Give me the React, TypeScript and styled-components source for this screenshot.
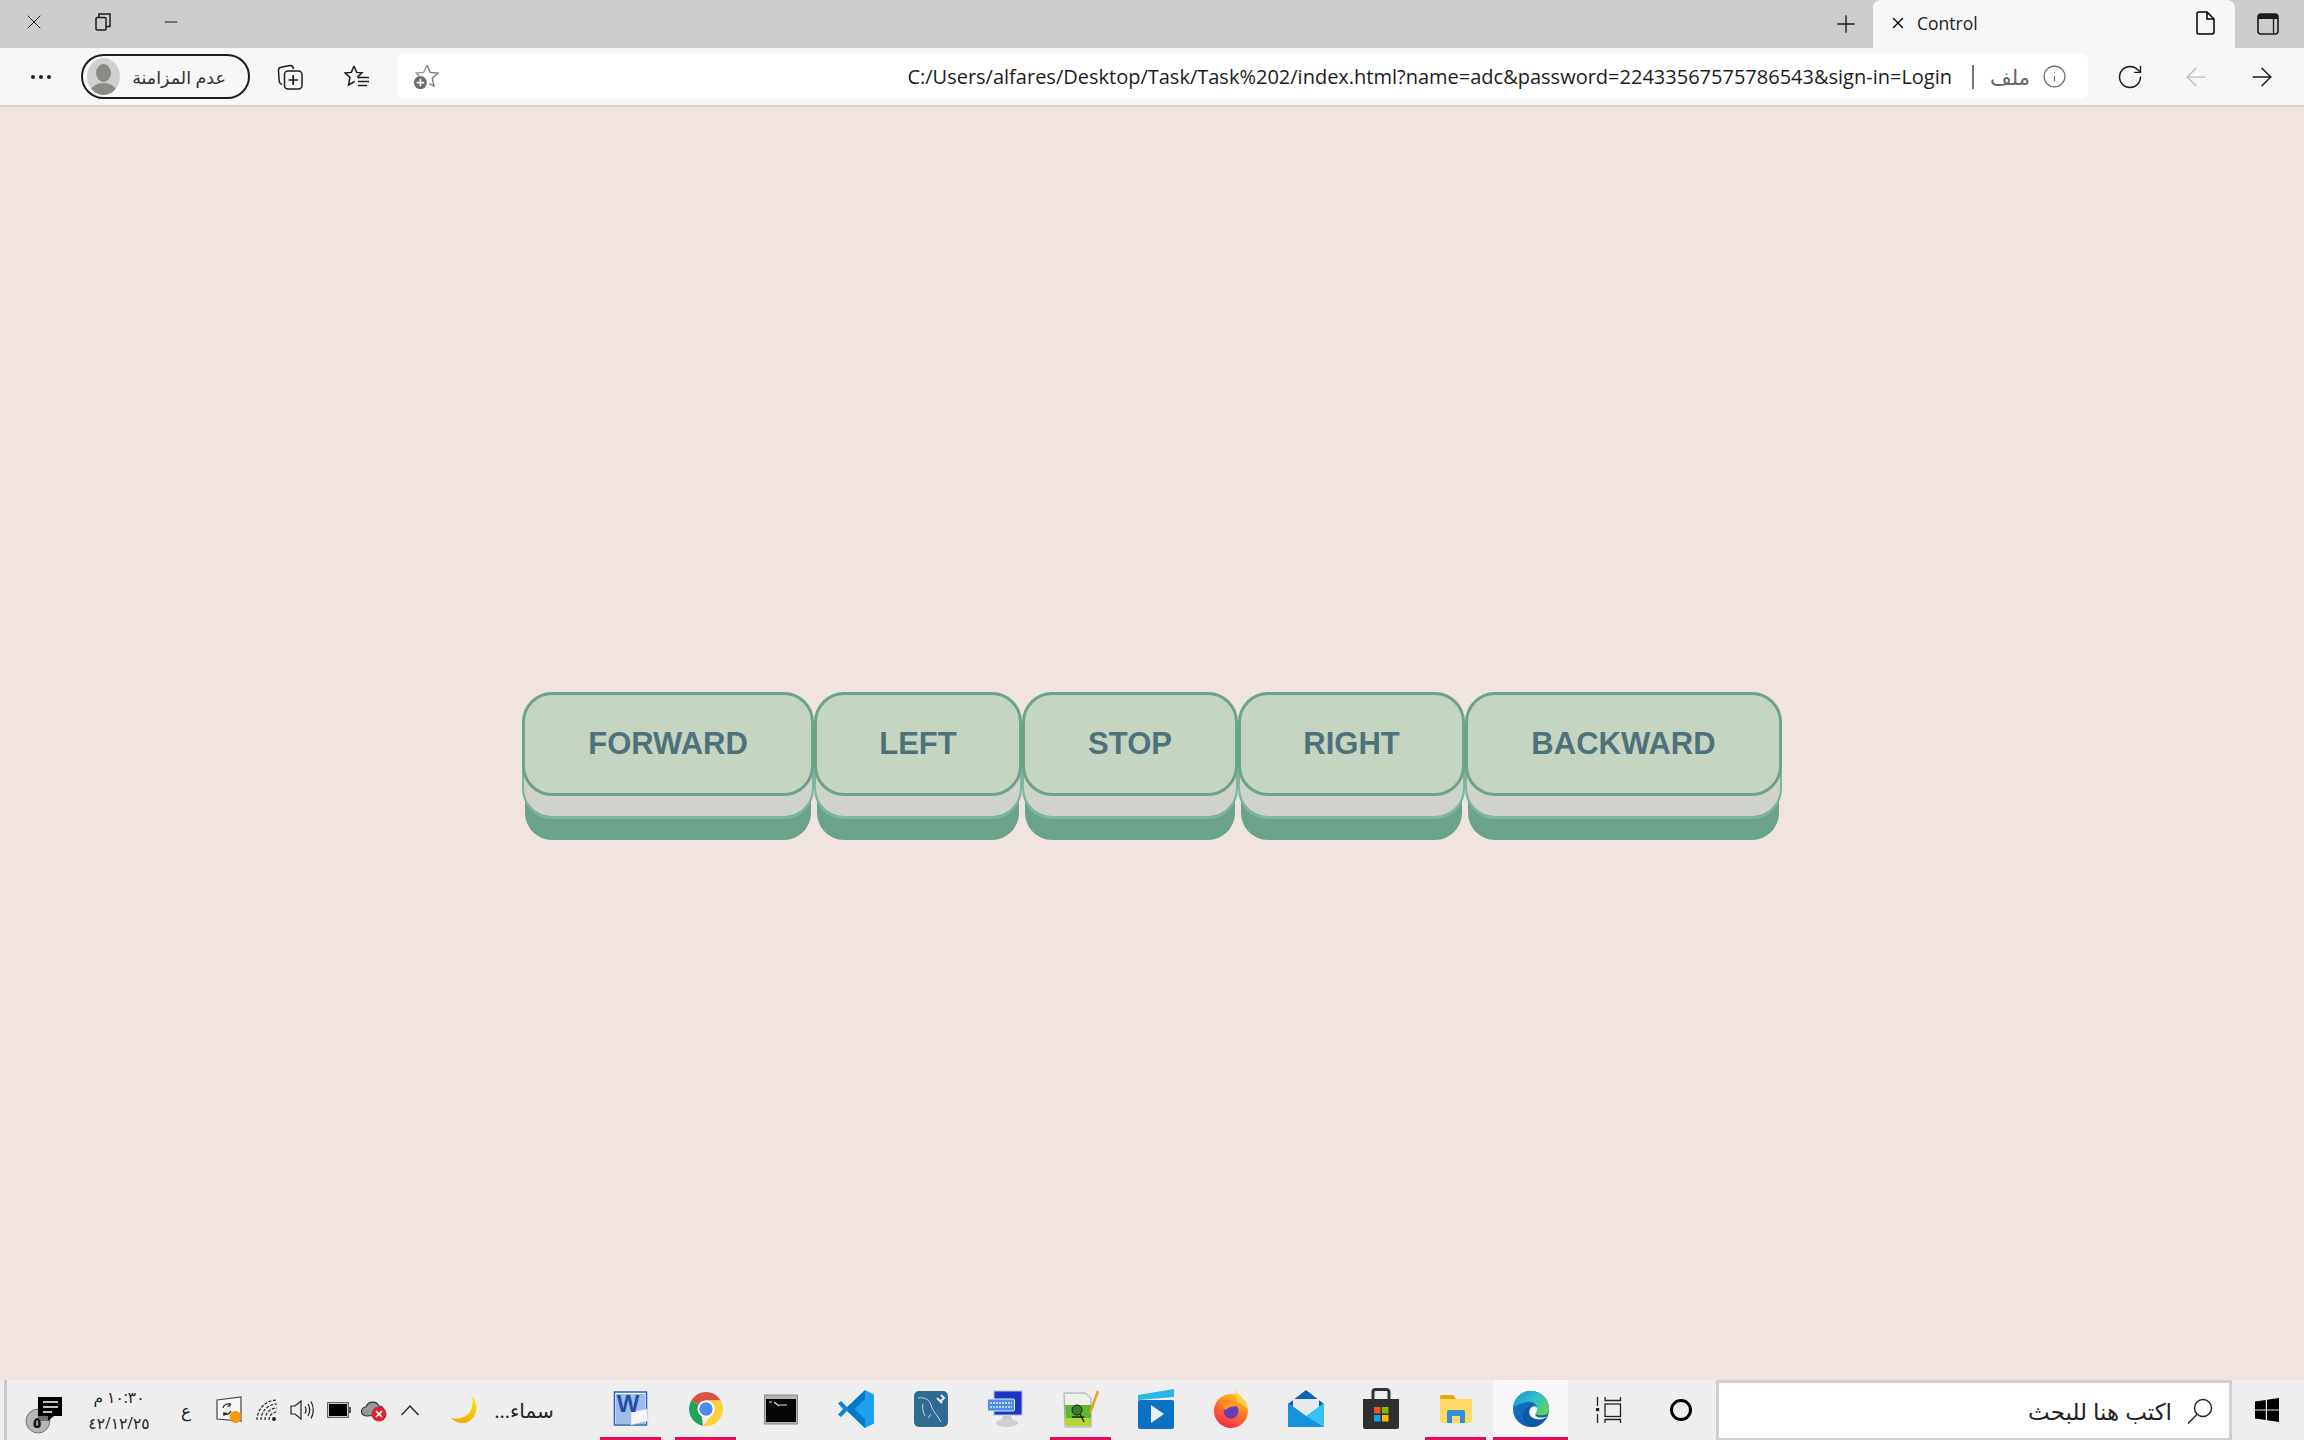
import React from "react";
import styled, { createGlobalStyle } from "styled-components";
import { ArrowLeft, ArrowRight, Info, Minus, Plus, RotateCw, X } from "lucide-react";

const UI_FONT = `"Open Sans", "DejaVu Sans", sans-serif`;

const COMMANDS: Array<{ label: string; width: number }> = [
  { label: "FORWARD", width: 292 },
  { label: "LEFT", width: 208 },
  { label: "STOP", width: 216 },
  { label: "RIGHT", width: 227 },
  { label: "BACKWARD", width: 317 },
];

const GlobalStyle = createGlobalStyle`
  html, body, #root {
    margin: 0;
    height: 100%;
  }
  body {
    background: #efe4df;
    font-family: ${UI_FONT};
    overflow: hidden;
  }
`;

const Screen = styled.div`
  display: flex;
  flex-direction: column;
  height: 1440px;
`;

// Browser chrome
const TabStrip = styled.div`
  display: flex;
  align-items: stretch;
  height: 48px;
  background: #cdcdcd;
`;

const Slot = styled.div<{ $w: number; $ml?: number }>`
  display: flex;
  align-items: center;
  justify-content: center;
  flex: none;
  width: ${(p) => p.$w}px;
  margin-left: ${(p) => p.$ml ?? 0}px;
  color: #1c1c1c;
`;

const WindowButton = styled(Slot)`
  padding-bottom: 4px;
`;

const NotificationSlot = styled(Slot)`
  padding-top: 12px;
`;

const Spacer = styled.div`
  flex: 1;
`;

const Tab = styled.div`
  display: flex;
  align-items: center;
  width: 362px;
  box-sizing: border-box;
  padding: 0 20px 2px 16px;
  background: #f7f7f7;
  border-radius: 8px 8px 0 0;
`;

const TabTitle = styled.span`
  margin-left: 10px;
  font-size: 17.5px;
  color: #222;
  flex: 1;
`;

const Toolbar = styled.div`
  display: flex;
  align-items: center;
  height: 59px;
  box-sizing: border-box;
  background: #f7f7f7;
  border-bottom: 2px solid #d4d2d0;
`;

const Dots = styled.span`
  display: block;
  width: 4px;
  height: 4px;
  border-radius: 50%;
  background: #222;
  box-shadow: -8px 0 0 #222, 8px 0 0 #222;
`;

const ProfilePill = styled.div`
  display: flex;
  align-items: center;
  flex: none;
  width: 169px;
  height: 45px;
  box-sizing: border-box;
  padding: 0 22px 0 4px;
  border: 2px solid #1d1d1d;
  border-radius: 23px;
  justify-content: space-between;
`;

const Avatar = styled.div`
  position: relative;
  flex: none;
  width: 33px;
  height: 37px;
  overflow: hidden;
  border-radius: 50%;
  background: #d2d0cc;
`;

const AvatarHead = styled.span`
  position: absolute;
  left: 9px;
  top: 6px;
  width: 15px;
  height: 18px;
  border-radius: 50%;
  background: #8c8a87;
`;

const AvatarBody = styled.span`
  position: absolute;
  left: 3px;
  top: 25px;
  width: 27px;
  height: 20px;
  border-radius: 50%;
  background: #8c8a87;
`;

const ProfileLabel = styled.span`
  font-size: 17.5px;
  color: #333;
  white-space: nowrap;
`;

const AddressBar = styled.div`
  display: flex;
  align-items: center;
  flex: 1;
  height: 45px;
  margin-left: 27px;
  box-sizing: border-box;
  padding: 0 21px 0 16px;
  background: #fff;
  border-radius: 6px;
`;

const Url = styled.span`
  font-size: 20px;
  color: #1c1c1c;
  white-space: nowrap;
`;

const Divider = styled.span`
  flex: none;
  width: 2px;
  height: 24px;
  margin: 0 16px 0 20px;
  background: #777;
`;

const FileLabel = styled.span`
  margin-right: 12px;
  font-size: 21px;
  color: #666;
`;

// Page
const Page = styled.main`
  display: flex;
  flex: 1;
  align-items: center;
  justify-content: center;
  background: #efe4df;
`;

const CommandButton = styled.button<{ $w: number }>`
  flex: none;
  width: ${(p) => p.$w}px;
  height: 104px;
  padding: 0;
  background: #c6d5c2;
  border: 3px solid #6ca48a;
  border-radius: 30px;
  color: #4f727a;
  font-family: "Liberation Sans", Arial, sans-serif;
  font-size: 31px;
  font-weight: 700;
  box-shadow:
    0 22px 0 -2px #cfd3cc,
    0 23px 0 0 #7cb79c,
    0 47px 0 -3px #6ba38a;
`;

const CommandRow = styled.div`
  display: flex;
`;

// Taskbar
const Taskbar = styled.footer`
  display: flex;
  align-items: stretch;
  height: 60px;
  background: #eeeeee;
`;

const TaskbarEdge = styled.span`
  flex: none;
  width: 3px;
  margin-left: 4px;
  background: #c9c9c9;
`;

const Clock = styled.div`
  display: flex;
  flex-direction: column;
  align-items: center;
  gap: 5px;
  font-size: 15.5px;
  line-height: 21px;
  color: #222;
`;

const TrayText = styled.span<{ $size: number }>`
  font-size: ${(p) => p.$size}px;
  color: #222;
  white-space: nowrap;
`;

const AppSlot = styled.div<{ $active?: boolean; $running?: boolean }>`
  position: relative;
  display: flex;
  align-items: center;
  justify-content: center;
  flex: none;
  width: 75px;
  box-sizing: border-box;
  padding-bottom: 2px;
  background: ${(p) => (p.$active ? "#f8f8f8" : "transparent")};

  &::after {
    content: "";
    display: ${(p) => (p.$running ? "block" : "none")};
    position: absolute;
    left: ${(p) => (p.$active ? 0 : 7)}px;
    right: ${(p) => (p.$active ? 0 : 7)}px;
    bottom: 0;
    height: 3px;
    background: #e60a5c;
  }
`;

const AppStrip = styled.div`
  display: flex;
  margin-left: 39px;
`;

const SearchBox = styled.div`
  display: flex;
  align-items: center;
  justify-content: flex-end;
  flex: none;
  width: 516px;
  margin-left: 20px;
  box-sizing: border-box;
  padding-right: 16px;
  background: #fff;
  border: 3px solid #cfcfcf;
  border-bottom-width: 2px;
`;

const SearchText = styled.span`
  margin-right: 15px;
  font-size: 23px;
  color: #222;
`;

// Drawings
const Line = { fill: "none", stroke: "currentColor", strokeWidth: 1.5 } as const;

const RestoreIcon = () => (
  <svg width="16" height="18" viewBox="0 0 16 18" {...Line}>
    <rect x="1" y="4.500" width="10" height="12.500" rx="1" />
    <path d="M4 4V1h11v12.500h-4" />
  </svg>
);

const PageIcon = () => (
  <svg width="19" height="24" viewBox="0 0 19 24" {...Line}>
    <path d="M3 1h8l7 7v13a2 2 0 0 1-2 2H3a2 2 0 0 1-2-2V3a2 2 0 0 1 2-2z" />
    <path d="M11 1v7h7" />
  </svg>
);

const SidebarIcon = () => (
  <svg width="22" height="22" viewBox="0 0 22 22">
    <rect x="1" y="1" width="20" height="20" rx="3" fill="none" stroke="#1c1c1c" strokeWidth="1.600" />
    <path d="M1 3a2 2 0 0 1 2-2h16a2 2 0 0 1 2 2v3H1z" fill="#1c1c1c" />
    <path d="M16.500 6v15" stroke="#1c1c1c" strokeWidth="1.300" />
  </svg>
);

const CollectionsIcon = () => (
  <svg width="26" height="26" viewBox="0 0 26 26" fill="none" stroke="#1c1c1c" strokeWidth="1.500">
    <path d="M5 20.500C3 20 2.500 19 2.200 17L1.500 7C1.400 5 2.300 3.500 4 3.300L13 1.600C15 1.300 16 2.500 16.500 5" />
    <rect x="7.500" y="7" width="17.500" height="18" rx="3.500" />
    <path d="M16.200 11v10M11.500 16h9.500" strokeWidth="1.700" />
  </svg>
);

const FavoritesIcon = () => (
  <svg width="26" height="26" viewBox="0 0 26 26" fill="none" stroke="#1c1c1c" strokeWidth="1.500">
    <path d="M10 2l2.700 6.400 5.300.5-4.200 3.800 1.300 1.500M10 2L7.300 8.400 1 9l5 4.400L4.500 21l6.200-3.500" />
    <path d="M14 13.500h11M14 17.500h11M14 21.500h9" strokeWidth="1.700" />
  </svg>
);

const AddFavoriteIcon = () => (
  <svg width="28" height="30" viewBox="0 0 28 30">
    <path d="M15 2l3.500 8 8.500.7-6.300 5.700 1.900 8.300-5-2.600" fill="none" stroke="#777" strokeWidth="1.400" />
    <path d="M15 2l-3.500 8-8.300.7 3.500 3.300" fill="none" stroke="#999" strokeWidth="1.400" />
    <circle cx="8" cy="21" r="7" fill="#6d6d6d" />
    <path d="M8 17v8M4 21h8" stroke="#fff" strokeWidth="1.800" />
  </svg>
);

const NotificationIcon = () => (
  <svg width="38" height="38" viewBox="0 0 38 38">
    <circle cx="13" cy="24" r="12" fill="#b5b5b5" stroke="#777" />
    <path d="M13 24V12a12 12 0 0 1 12 12z" fill="#6e6e6e" />
    <path d="M13 0h24v19H29l-6 5v-5H13z" fill="#000" />
    <path d="M18 5h15M18 10h15M18 15h9" stroke="#fff" strokeWidth="1.500" />
    <text x="12" y="31" fontSize="15" fontWeight="700" textAnchor="middle" fontFamily="DejaVu Sans" fill="#111">٥</text>
  </svg>
);

const SyncIcon = () => (
  <svg width="28" height="28" viewBox="0 0 28 28">
    <path d="M1 4l24-3v24L1 23z" fill="#f6f6f6" stroke="#444" strokeWidth="1.200" />
    <path d="M7 12a5 5 0 0 1 8-3M14 7v3h-3M15 15a5 5 0 0 1-8 2M8 20v-3h3" fill="none" stroke="#222" strokeWidth="1.200" />
    <circle cx="19.500" cy="21" r="6" fill="#f59a06" />
  </svg>
);

const WifiIcon = () => (
  <svg width="24" height="24" viewBox="0 0 24 24" fill="none" stroke="#222" strokeWidth="1.200">
    <path d="M2 22A20 20 0 0 1 22 2M6 22A16 16 0 0 1 22 6M10 22A12 12 0 0 1 22 10M14 22A8 8 0 0 1 22 14" strokeDasharray="3 1.500" />
    <circle cx="19" cy="21" r="2" fill="#222" stroke="none" />
  </svg>
);

const VolumeIcon = () => (
  <svg width="24" height="22" viewBox="0 0 24 22" fill="none" stroke="#222" strokeWidth="1.200">
    <path d="M1 7h4l6-5v18l-6-5H1z" />
    <path d="M15 7.500c1.200 2 1.200 5 0 7M18 5c2 3.500 2 8.500 0 12M21 2.500c3 5 3 12 0 17" />
  </svg>
);

const BatteryIcon = () => (
  <svg width="24" height="16" viewBox="0 0 24 16">
    <rect x="0.700" y="0.700" width="20.600" height="14.600" fill="#fff" stroke="#555" strokeWidth="1.200" />
    <rect x="2" y="2" width="18" height="12" fill="#000" />
    <rect x="22" y="5" width="2" height="6" fill="#555" />
  </svg>
);

const CloudIcon = () => (
  <svg width="26" height="24" viewBox="0 0 26 24">
    <path d="M5 18a4.500 4.500 0 0 1 0-9 7 7 0 0 1 13-1 5 5 0 0 1 3 9z" fill="#9a9a9a" stroke="#333" strokeWidth="1.200" />
    <circle cx="18" cy="16" r="7.500" fill="#d9242f" />
    <path d="M15 13l6 6M21 13l-6 6" stroke="#fff" strokeWidth="1.600" />
  </svg>
);

const CaretIcon = () => (
  <svg width="20" height="12" viewBox="0 0 20 12" fill="none" stroke="#222" strokeWidth="1.300">
    <path d="M1.500 11L10 2l8.500 9" />
  </svg>
);

const MoonIcon = () => (
  <svg width="30" height="30" viewBox="0 0 30 30">
    <defs>
      <linearGradient id="moon" x1="0.800" y1="0" x2="0.300" y2="1">
        <stop offset="0" stopColor="#ffe600" />
        <stop offset="1" stopColor="#f5a400" />
      </linearGradient>
    </defs>
    <path d="M22 1c6 7 6 17 0 23-5 5-14 6-21-1 9 2 15-1 19-6 3-5 3-11 2-16z" fill="url(#moon)" />
  </svg>
);

const WordIcon = () => (
  <svg width="36" height="36" viewBox="0 0 36 36">
    <rect x="1.500" y="1" width="32" height="33" fill="#fff" stroke="#2a5fbf" strokeWidth="1.500" />
    <rect x="3" y="3" width="29" height="30" fill="#9dbce8" />
    <path d="M18 21l16-3 1 12-17 4z" fill="#f4f6fb" stroke="#b8c4d8" strokeWidth="0.600" />
    <text x="15" y="21" fontSize="24" fontWeight="700" fontFamily="Liberation Sans" textAnchor="middle" fill="#1d50a8">W</text>
  </svg>
);

const ChromeIcon = () => (
  <svg width="36" height="36" viewBox="0 0 36 36">
    <path d="M3.300 9.500A17 17 0 0 1 32.700 9.500H18A8.500 8.500 0 0 0 10.600 13.800Z" fill="#dd5145" />
    <path d="M3.300 9.500L10.600 13.800 13.700 25.500 15 34.700A17 17 0 0 1 3.300 9.500Z" fill="#22a25a" />
    <path d="M32.700 9.500A17 17 0 0 1 15 34.700L25.300 22.300 18 9.500Z" fill="#fcd03c" />
    <circle cx="18" cy="18" r="8.500" fill="#fff" />
    <circle cx="18" cy="18" r="6.700" fill="#4d8bf0" />
  </svg>
);

const ConsoleIcon = () => (
  <svg width="36" height="36" viewBox="0 0 36 36">
    <rect x="1.500" y="4" width="33" height="29" fill="#b4b4b4" stroke="#8a8a8a" />
    <rect x="3" y="8" width="30" height="23" fill="#050505" />
    <path d="M6 11h3M11 11l5 4M16 14h8" stroke="#ddd" strokeWidth="1.200" />
  </svg>
);

const VsCodeIcon = () => (
  <svg width="38" height="40" viewBox="0 0 38 40">
    <path d="M28 1l9 4.500v29L28 39 10 22l18-18z" fill="#1ba1ee" />
    <path d="M28 1L8 20l20 19v-9L17.500 20 28 10z" fill="#0078c8" />
    <path d="M4 12L1 14.500 6 20l-5 5.500L4 28l8-8z" fill="#0b86d6" />
  </svg>
);

const MySqlIcon = () => (
  <svg width="36" height="38" viewBox="0 0 36 38">
    <rect x="1" y="1" width="34" height="36" rx="5" fill="#2f6b90" />
    <path d="M5 8c6-1 11 1 13 7 1 4 3 7 7 12l3 5M10 14c-1 4 0 8 2 12M18 24l-3 4" fill="none" stroke="#c6d6e0" strokeWidth="1" />
    <path d="M24 8l5 5M28 5l3 3-3 3" fill="none" stroke="#e5edf3" strokeWidth="2" />
  </svg>
);

const KeyboardIcon = () => (
  <svg width="38" height="38" viewBox="0 0 38 38">
    <rect x="7" y="1" width="28" height="24" fill="#1d35c4" stroke="#b6bfd0" />
    <path d="M16 26h8l2 5H14z" fill="#c9c9c9" />
    <ellipse cx="20" cy="33" rx="11" ry="4" fill="#d0d0d0" />
    <rect x="0.500" y="9" width="27" height="12" rx="1" fill="#4d8fdd" stroke="#e2ecf7" />
    <path d="M3 13h22M3 17h22" stroke="#dceafa" strokeWidth="1.600" strokeDasharray="2 1" />
  </svg>
);

const NotepadIcon = () => (
  <svg width="38" height="38" viewBox="0 0 38 38">
    <path d="M2 3h21l6 5v29H3z" fill="#eef0ec" stroke="#a5a5a5" />
    <path d="M3 15h26v21H4z" fill="#5fb72f" />
    <path d="M3 28h26v8H4z" fill="#b2d633" />
    <circle cx="15" cy="20" r="5" fill="#3b7d25" stroke="#222" />
    <path d="M10 27h12M18 24l4 8" stroke="#222" strokeWidth="1.500" />
    <path d="M36 1l-8 22" stroke="#e8a41f" strokeWidth="2.500" />
  </svg>
);

const MediaIcon = () => (
  <svg width="38" height="40" viewBox="0 0 38 40">
    <path d="M1 6L37 0v8L1 11z" fill="#2ab6ea" />
    <rect x="1" y="11" width="36" height="29" rx="2" fill="#0c71c4" />
    <path d="M14 16l13 9-13 9z" fill="#e9eff5" />
  </svg>
);

const FirefoxIcon = () => (
  <svg width="36" height="40" viewBox="0 0 36 40">
    <defs>
      <linearGradient id="fox" x1="0.700" y1="0" x2="0.200" y2="1">
        <stop offset="0" stopColor="#ffc71e" />
        <stop offset="0.500" stopColor="#ff6a2b" />
        <stop offset="1" stopColor="#f0264f" />
      </linearGradient>
    </defs>
    <circle cx="18" cy="22" r="17" fill="url(#fox)" />
    <path d="M22 0c2 5 11 10 13 20L24 12z" fill="#ffd23a" />
    <path d="M3 9l6 5 8-3-6 7z" fill="#ff8a2a" />
    <circle cx="18" cy="22" r="7.500" fill="#6a3bb8" />
    <path d="M9 15c6-3 13-2 15 2l-7 1-5 3z" fill="#ff9a1f" />
  </svg>
);

const MailIcon = () => (
  <svg width="36" height="38" viewBox="0 0 36 38">
    <path d="M0 14L18 0l18 14v4H0z" fill="#0a64b4" />
    <path d="M5 9h26v12L18 28 5 21z" fill="#e8e8e8" />
    <path d="M0 13l18 13 18-13v24H0z" fill="#35c1f1" />
    <path d="M0 37V13l18 13 18 11z" fill="#1593dc" />
  </svg>
);

const StoreIcon = () => (
  <svg width="36" height="42" viewBox="0 0 36 42">
    <path d="M10 13V4a2.500 2.500 0 0 1 2.500-2.500h11A2.500 2.500 0 0 1 26 4v9" fill="none" stroke="#333" strokeWidth="3" />
    <path d="M0 11h36v28a2 2 0 0 1-2 2H2a2 2 0 0 1-2-2z" fill="#2f2f2f" />
    <rect x="11" y="19" width="6.500" height="6.500" fill="#f25022" />
    <rect x="19" y="19" width="6.500" height="6.500" fill="#7fba00" />
    <rect x="11" y="27" width="6.500" height="6.500" fill="#00a4ef" />
    <rect x="19" y="27" width="6.500" height="6.500" fill="#ffb900" />
  </svg>
);

const ExplorerIcon = () => (
  <svg width="32" height="28" viewBox="0 0 32 28">
    <path d="M0 2a2 2 0 0 1 2-2h11l3 4 H0z" fill="#e4a80a" />
    <path d="M0 4h32v22a2 2 0 0 1-2 2H2a2 2 0 0 1-2-2z" fill="#ffd868" />
    <path d="M7 28V17a2 2 0 0 1 2-2h14a2 2 0 0 1 2 2v11h-5v-7h-8v7z" fill="#2f8fd8" />
  </svg>
);

const EdgeIcon = () => (
  <svg width="38" height="40" viewBox="0 0 38 40">
    <defs>
      <linearGradient id="edgeTop" x1="0" y1="0" x2="1" y2="0.700">
        <stop offset="0" stopColor="#1596d6" />
        <stop offset="0.600" stopColor="#31c4c4" />
        <stop offset="1" stopColor="#5ed35c" />
      </linearGradient>
      <linearGradient id="edgeLow" x1="0" y1="0" x2="0.800" y2="1">
        <stop offset="0" stopColor="#0f7ad0" />
        <stop offset="1" stopColor="#1058a6" />
      </linearGradient>
    </defs>
    <circle cx="19" cy="20" r="18" fill="url(#edgeLow)" />
    <path d="M1 18C3 7 11 1 20 2c10 1 18 9 17 19-.5 5-5 6-11 5-5-1-2-5-1-7 0-4-5-7-10-6-6 1-11 3-14 5z" fill="url(#edgeTop)" />
    <path d="M36 27c-3 6-9 11-15 11-5 0-9-3-10-9-1-8 5-12 10-13-4 3-5 7-3 10 3 5 12 4 18 1z" fill="#0c59a4" />
    <path d="M25 19c1 3-3 6-1 8 2 2 8 2 12 0-3 3-8 4-12 3-6-1-8-6-6-10 1-3 6-4 7-1z" fill="#f8f8f8" />
  </svg>
);

const TaskViewIcon = () => (
  <svg width="26" height="26" viewBox="0 0 26 26" fill="none" stroke="#222" strokeWidth="1.300">
    <path d="M1.500 0v9M1.500 17v9" />
    <rect x="0" y="11" width="3.200" height="3.200" fill="#222" stroke="none" />
    <rect x="9" y="7" width="15.500" height="12.500" />
    <path d="M9 0v3.500h15.500V0M9 26v-3.500h15.500V26" />
  </svg>
);

const CortanaIcon = () => (
  <svg width="24" height="24" viewBox="0 0 24 24" fill="none" stroke="#000" strokeWidth="3">
    <circle cx="12" cy="12" r="9.500" />
  </svg>
);

const SearchIcon = () => (
  <svg width="26" height="26" viewBox="0 0 26 26" fill="none" stroke="#222" strokeWidth="1.400">
    <circle cx="16" cy="10" r="8.500" />
    <path d="M10 16.500L1 25.500" />
  </svg>
);

const WindowsIcon = () => (
  <svg width="24" height="24" viewBox="0 0 24 24" fill="#000">
    <path d="M0 3.500l10.800-1.500v9.400H0zM12 1.800L24 0v11.400H12zM0 12.600h10.800V22L0 20.500zM12 12.600h12V24l-12-1.800z" />
  </svg>
);

const APPS: Array<{ icon: React.ReactNode; running?: boolean; active?: boolean }> = [
  { icon: <WordIcon />, running: true },
  { icon: <ChromeIcon />, running: true },
  { icon: <ConsoleIcon /> },
  { icon: <VsCodeIcon /> },
  { icon: <MySqlIcon /> },
  { icon: <KeyboardIcon /> },
  { icon: <NotepadIcon />, running: true },
  { icon: <MediaIcon /> },
  { icon: <FirefoxIcon /> },
  { icon: <MailIcon /> },
  { icon: <StoreIcon /> },
  { icon: <ExplorerIcon />, running: true },
  { icon: <EdgeIcon />, running: true, active: true },
];

const App: React.FC = () => (
  <Screen>
    <GlobalStyle />
    <TabStrip>
      <WindowButton $w={68}><X size={24} strokeWidth={1} /></WindowButton>
      <WindowButton $w={69}><RestoreIcon /></WindowButton>
      <WindowButton $w={68}><Minus size={20} strokeWidth={1.2} /></WindowButton>
      <Spacer />
      <Slot $w={54}><Plus size={28} strokeWidth={1.2} /></Slot>
      <Tab>
        <X size={18} strokeWidth={1.8} />
        <TabTitle>Control</TabTitle>
        <PageIcon />
      </Tab>
      <Slot $w={65}><SidebarIcon /></Slot>
      <Slot $w={4} />
    </TabStrip>

    <Toolbar>
      <Slot $w={81}><Dots /></Slot>
      <ProfilePill>
        <Avatar>
          <AvatarHead />
          <AvatarBody />
        </Avatar>
        <ProfileLabel dir="rtl">عدم المزامنة</ProfileLabel>
      </ProfilePill>
      <Slot $w={26} $ml={27}><CollectionsIcon /></Slot>
      <Slot $w={26} $ml={41}><FavoritesIcon /></Slot>
      <AddressBar>
        <Slot $w={26}><AddFavoriteIcon /></Slot>
        <Spacer />
        <Url>C:/Users/alfares/Desktop/Task/Task%202/index.html?name=adc&amp;password=22433567575786543&amp;sign-in=Login</Url>
        <Divider />
        <FileLabel dir="rtl">ملف</FileLabel>
        <Info size={25} strokeWidth={1.1} color="#666" />
      </AddressBar>
      <Slot $w={40} $ml={22}><RotateCw size={28} strokeWidth={1.2} /></Slot>
      <Slot $w={40} $ml={26}><ArrowLeft size={30} strokeWidth={1} color="#bdbdbd" /></Slot>
      <Slot $w={40} $ml={26}><ArrowRight size={30} strokeWidth={1.2} /></Slot>
      <Slot $w={22} />
    </Toolbar>

    <Page>
      <CommandRow>
        {COMMANDS.map((command) => (
          <CommandButton key={command.label} $w={command.width}>{command.label}</CommandButton>
        ))}
      </CommandRow>
    </Page>

    <Taskbar>
      <TaskbarEdge />
      <NotificationSlot $w={60} $ml={7}><NotificationIcon /></NotificationSlot>
      <Slot $w={70} $ml={10}>
        <Clock>
          <span dir="rtl">١٠:٣٠ م</span>
          <span>٤٢/١٢/٢٥</span>
        </Clock>
      </Slot>
      <Slot $w={24} $ml={20}><TrayText $size={17}>ع</TrayText></Slot>
      <Slot $w={30} $ml={17}><SyncIcon /></Slot>
      <Slot $w={30} $ml={7}><WifiIcon /></Slot>
      <Slot $w={30} $ml={5}><VolumeIcon /></Slot>
      <Slot $w={30} $ml={7}><BatteryIcon /></Slot>
      <Slot $w={30} $ml={5}><CloudIcon /></Slot>
      <Slot $w={30} $ml={6}><CaretIcon /></Slot>
      <Slot $w={30} $ml={25}><MoonIcon /></Slot>
      <Slot $w={60} $ml={14}><TrayText $size={20} dir="rtl">سماء...</TrayText></Slot>
      <AppStrip>
        {APPS.map((app, i) => (
          <AppSlot key={i} $running={app.running} $active={app.active}>{app.icon}</AppSlot>
        ))}
      </AppStrip>
      <Slot $w={30} $ml={26}><TaskViewIcon /></Slot>
      <Slot $w={30} $ml={42}><CortanaIcon /></Slot>
      <SearchBox>
        <SearchText dir="rtl">اكتب هنا للبحث</SearchText>
        <SearchIcon />
      </SearchBox>
      <Slot $w={30} $ml={20}><WindowsIcon /></Slot>
    </Taskbar>
  </Screen>
);

export default App;
